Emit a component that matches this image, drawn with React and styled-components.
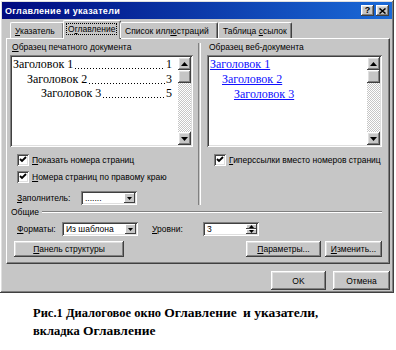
import styled, { createGlobalStyle, css } from "styled-components";

const GlobalStyle = createGlobalStyle`
  html, body {
    margin: 0;
    padding: 0;
    background: #ffffff;
  }
  body {
    font-family: "Liberation Sans", Arial, sans-serif;
  }
`;

const raised = css`
  box-shadow: inset -1px -1px #404040, inset 1px 1px #ffffff,
    inset -2px -2px #808080, inset 2px 2px #dfdfdf;
`;

const sunken = css`
  box-shadow: inset 1px 1px #808080, inset -1px -1px #ffffff,
    inset 2px 2px #404040, inset -2px -2px #dfdfdf;
`;

const Page = styled.div`
  width: 396px;
  height: 350px;
  background: #ffffff;
`;

const Dialog = styled.div`
  width: 394px;
  height: 293px;
  box-sizing: border-box;
  padding: 2px;
  background: #c6c6c6;
  ${raised}
  display: flex;
  flex-direction: column;
  font-size: 8.5px;
  color: #000;
`;

const TitleBar = styled.div`
  height: 17px;
  display: flex;
  align-items: center;
  justify-content: space-between;
  padding: 0 3px;
  background: linear-gradient(90deg, #000a80 0%, #0a34a4 45%, #1a6ad8 100%);
`;

const Title = styled.span`
  color: #fff;
  font-weight: bold;
  font-size: 9px;
  letter-spacing: 0.3px;
`;

const TitleButtons = styled.div`
  display: flex;
  gap: 2px;
`;

const TitleButton = styled.div`
  width: 13px;
  height: 11px;
  background: #c6c6c6;
  ${raised}
  display: flex;
  align-items: center;
  justify-content: center;
  font-size: 9px;
  font-weight: bold;
  line-height: 1;
`;

const Body = styled.div`
  flex: 1;
  display: flex;
  flex-direction: column;
  padding: 1px 2px 0 4px;
`;

const TabRow = styled.div`
  display: flex;
  align-items: flex-end;
  height: 18px;
  padding-left: 4px;
  position: relative;
  z-index: 1;
`;

const Tab = styled.div`
  width: ${(p) => p.width}px;
  height: ${(p) => (p.active ? 19 : 16)}px;
  box-sizing: border-box;
  margin: 0 ${(p) => (p.active ? -1 : 0)}px ${(p) => (p.active ? -1 : 0)}px;
  border-top: 1px solid #fff;
  border-left: 1px solid #fff;
  border-right: 1px solid #404040;
  border-radius: 2px 2px 0 0;
  background: #c6c6c6;
  box-shadow: inset -1px 0 #808080;
  display: flex;
  align-items: center;
  padding-left: ${(p) => (p.active ? 3 : 4)}px;
  padding-bottom: ${(p) => (p.active ? 2 : 0)}px;
  white-space: nowrap;
`;

const FocusLabel = styled.span`
  outline: 1px dotted #000;
  padding: 0 1px;
`;

const Panel = styled.div`
  height: 226px;
  box-sizing: border-box;
  border-top: 1px solid #fff;
  border-left: 1px solid #fff;
  border-right: 1px solid #404040;
  border-bottom: 1px solid #404040;
  box-shadow: inset -1px -1px #808080;
  padding: 2px 7px 0 3px;
  display: flex;
  flex-direction: column;
`;

const Columns = styled.div`
  display: flex;
`;

const Column = styled.div`
  width: ${(p) => p.width}px;
  display: flex;
  flex-direction: column;
`;

const Divider = styled.div`
  width: 1px;
  margin: 2px 6px 0 5px;
  border-left: 1px solid #808080;
  border-right: 1px solid #fff;
`;

const GroupLabel = styled.div`
  height: 12px;
  line-height: 12px;
  padding-left: 2px;
  margin-bottom: 2px;
  white-space: nowrap;
`;

const Preview = styled.div`
  height: 92px;
  box-sizing: border-box;
  padding: 2px;
  background: #fff;
  ${sunken}
  display: flex;
`;

const PreviewList = styled.div`
  flex: 1;
  padding: 0 6px 0 1px;
  font-family: "Liberation Serif", "Times New Roman", serif;
  font-size: 12px;
`;

const TocLine = styled.div`
  display: flex;
  align-items: baseline;
  line-height: 14.5px;
  padding-left: ${(p) => p.indent}px;
  white-space: nowrap;
`;

const Leader = styled.span`
  flex: 1;
  align-self: stretch;
  margin: 0 1px;
  background-image: radial-gradient(circle, #000 0.7px, transparent 0.9px);
  background-size: 3px 3px;
  background-repeat: repeat-x;
  background-position: 0 10px;
`;

const WebLink = styled.div`
  line-height: 15px;
  padding-left: ${(p) => p.indent}px;
  color: #1010ff;
  text-decoration: underline;
  white-space: nowrap;
`;

const ScrollBar = styled.div`
  width: 13px;
  flex-shrink: 0;
  display: flex;
  flex-direction: column;
`;

const ScrollButton = styled.div`
  width: 13px;
  height: 13px;
  box-sizing: border-box;
  background: #c6c6c6;
  ${raised}
  display: flex;
  align-items: center;
  justify-content: center;
`;

const ScrollTrack = styled.div`
  flex: 1;
  background: repeating-conic-gradient(#ffffff 0 25%, #c6c6c6 0 50%) 0 0 / 2px 2px;
`;

const CheckRow = styled.label`
  display: flex;
  align-items: center;
  gap: 3px;
  height: 17px;
  padding-left: 7px;
  margin-top: ${(p) => p.top || 0}px;
  white-space: nowrap;
`;

const CheckBox = styled.span`
  width: 12px;
  height: 12px;
  flex-shrink: 0;
  box-sizing: border-box;
  background: #fff;
  ${sunken}
  display: flex;
  align-items: center;
  justify-content: center;
`;

const FieldRow = styled.div`
  display: flex;
  align-items: center;
  margin-top: ${(p) => p.top || 0}px;
  padding-left: ${(p) => p.indent || 0}px;
`;

const FieldLabel = styled.span`
  width: ${(p) => p.width}px;
  margin-left: ${(p) => p.gap || 0}px;
  flex-shrink: 0;
  white-space: nowrap;
`;

const Select = styled.div`
  width: ${(p) => p.width}px;
  height: 14px;
  box-sizing: border-box;
  padding: 2px;
  background: #fff;
  ${sunken}
  display: flex;
  align-items: stretch;
`;

const SelectValue = styled.span`
  flex: 1;
  padding-left: 2px;
  line-height: 10px;
  white-space: nowrap;
  overflow: hidden;
`;

const SelectButton = styled.span`
  width: 11px;
  background: #c6c6c6;
  box-shadow: inset -1px -1px #404040, inset 1px 1px #ffffff;
  display: flex;
  align-items: center;
  justify-content: center;
`;

const SpinButtons = styled.span`
  width: 11px;
  display: flex;
  flex-direction: column;
`;

const SpinHalf = styled.span`
  flex: 1;
  background: #c6c6c6;
  box-shadow: inset -1px -1px #404040, inset 1px 1px #ffffff;
  display: flex;
  align-items: center;
  justify-content: center;
`;

const SectionHead = styled.div`
  display: flex;
  align-items: center;
  gap: 3px;
  height: 12px;
  margin-top: 1px;
  padding-left: 1px;
`;

const Etched = styled.div`
  flex: 1;
  height: 0;
  border-top: 1px solid #808080;
  border-bottom: 1px solid #fff;
`;

const ButtonRow = styled.div`
  display: flex;
  align-items: center;
  gap: 4px;
  margin-top: 5px;
  padding-left: 4px;
`;

const Spacer = styled.div`
  flex: 1;
`;

const Button = styled.div`
  width: ${(p) => p.width}px;
  height: ${(p) => p.height || 16}px;
  box-sizing: border-box;
  background: #c6c6c6;
  ${raised}
  display: flex;
  align-items: center;
  justify-content: center;
  white-space: nowrap;
`;

const Footer = styled.div`
  display: flex;
  justify-content: flex-end;
  gap: 7px;
  margin-top: 7px;
`;

const Caption = styled.div`
  padding: 11px 0 0 33px;
  font-family: "Liberation Serif", "Times New Roman", serif;
  font-weight: bold;
  font-size: 12.5px;
  line-height: 18px;
  color: #000;
`;

const Big = styled.span`
  font-size: 13.5px;
`;

const Arrow = ({ dir }) => (
  <svg width="7" height="4" viewBox="0 0 7 4">
    <path d={dir === "up" ? "M3.5 0 L7 4 L0 4 Z" : "M0 0 L7 0 L3.5 4 Z"} fill="#000" />
  </svg>
);

const SmallArrow = ({ dir }) => (
  <svg width="5" height="3" viewBox="0 0 5 3">
    <path d={dir === "up" ? "M2.5 0 L5 3 L0 3 Z" : "M0 0 L5 0 L2.5 3 Z"} fill="#000" />
  </svg>
);

const Check = () => (
  <svg width="8" height="7" viewBox="0 0 8 7">
    <path d="M1 3 L3 5 L7 1" stroke="#000" strokeWidth="1.8" fill="none" />
  </svg>
);

const Scroll = () => (
  <ScrollBar>
    <ScrollButton>
      <Arrow dir="up" />
    </ScrollButton>
    <ScrollButton />
    <ScrollTrack />
    <ScrollButton>
      <Arrow dir="down" />
    </ScrollButton>
  </ScrollBar>
);

const tocItems = [
  { text: "Заголовок 1", page: 1, indent: 0 },
  { text: "Заголовок 2", page: 3, indent: 14 },
  { text: "Заголовок 3", page: 5, indent: 28 },
];

const webItems = [
  { text: "Заголовок 1", indent: 0 },
  { text: "Заголовок 2", indent: 12 },
  { text: "Заголовок 3", indent: 24 },
];

export default function App() {
  return (
    <Page>
      <GlobalStyle />
      <Dialog>
        <TitleBar>
          <Title>Оглавление и указатели</Title>
          <TitleButtons>
            <TitleButton>?</TitleButton>
            <TitleButton>
              <svg width="7" height="6" viewBox="0 0 7 6">
                <path d="M0.5 0.5 L6.5 5.5 M6.5 0.5 L0.5 5.5" stroke="#000" strokeWidth="1.5" />
              </svg>
            </TitleButton>
          </TitleButtons>
        </TitleBar>
        <Body>
          <TabRow>
            <Tab width={54}>
              <span><u>У</u>казатель</span>
            </Tab>
            <Tab width={58} active>
              <FocusLabel>О<u>г</u>лавление</FocusLabel>
            </Tab>
            <Tab width={98}>
              <span>Список илл<u>ю</u>страций</span>
            </Tab>
            <Tab width={74}>
              <span>Таблица <u>с</u>сылок</span>
            </Tab>
          </TabRow>
          <Panel>
            <Columns>
              <Column width={184}>
                <GroupLabel><u>О</u>бразец печатного документа</GroupLabel>
                <Preview>
                  <PreviewList>
                    {tocItems.map((item) => (
                      <TocLine key={item.text} indent={item.indent}>
                        <span>{item.text}</span>
                        <Leader />
                        <span>{item.page}</span>
                      </TocLine>
                    ))}
                  </PreviewList>
                  <Scroll />
                </Preview>
                <CheckRow top={4}>
                  <CheckBox><Check /></CheckBox>
                  <span><u>П</u>оказать номера страниц</span>
                </CheckRow>
                <CheckRow>
                  <CheckBox><Check /></CheckBox>
                  <span><u>Н</u>омера страниц по правому краю</span>
                </CheckRow>
                <FieldRow top={6} indent={7}>
                  <FieldLabel width={64}><u>З</u>аполнитель:</FieldLabel>
                  <Select width={56}>
                    <SelectValue>.......</SelectValue>
                    <SelectButton><SmallArrow dir="down" /></SelectButton>
                  </Select>
                </FieldRow>
              </Column>
              <Divider />
              <Column width={176}>
                <GroupLabel>Образец веб-документа</GroupLabel>
                <Preview>
                  <PreviewList>
                    {webItems.map((item) => (
                      <WebLink key={item.text} indent={item.indent}>{item.text}</WebLink>
                    ))}
                  </PreviewList>
                  <Scroll />
                </Preview>
                <CheckRow top={4}>
                  <CheckBox><Check /></CheckBox>
                  <span><u>Г</u>иперссылки вместо номеров страниц</span>
                </CheckRow>
              </Column>
            </Columns>
            <SectionHead>
              <span>Общие</span>
              <Etched />
            </SectionHead>
            <FieldRow top={4} indent={7}>
              <FieldLabel width={45}><u>Ф</u>орматы:</FieldLabel>
              <Select width={76}>
                <SelectValue>Из шаблона</SelectValue>
                <SelectButton><SmallArrow dir="down" /></SelectButton>
              </Select>
              <FieldLabel width={51} gap={14}><u>У</u>ровни:</FieldLabel>
              <Select width={56}>
                <SelectValue>3</SelectValue>
                <SpinButtons>
                  <SpinHalf><SmallArrow dir="up" /></SpinHalf>
                  <SpinHalf><SmallArrow dir="down" /></SpinHalf>
                </SpinButtons>
              </Select>
            </FieldRow>
            <ButtonRow>
              <Button width={110}><span><u>П</u>анель структуры</span></Button>
              <Spacer />
              <Button width={75}><span><u>П</u>араметры...</span></Button>
              <Button width={57}><span><u>И</u>зменить...</span></Button>
            </ButtonRow>
          </Panel>
          <Footer>
            <Button width={55} height={19}>OK</Button>
            <Button width={57} height={19}>Отмена</Button>
          </Footer>
        </Body>
      </Dialog>
      <Caption>
        Рис.1 Диалоговое окно <Big>Оглавление</Big>&nbsp; <Big>и указатели</Big>,
        <br />
        вкладка <Big>Оглавление</Big>
      </Caption>
    </Page>
  );
}
